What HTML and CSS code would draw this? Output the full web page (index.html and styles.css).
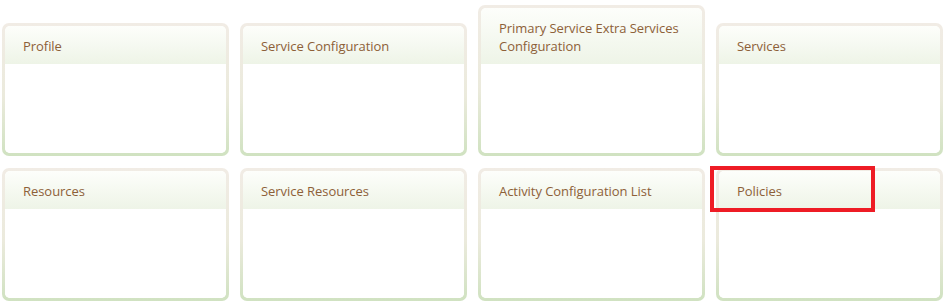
FILE: index.html
```html
<!DOCTYPE html>
<html>
<head>
<meta charset="utf-8">
<link rel="stylesheet" href="styles.css">
</head>
<body>
<div class="grid">
  <div class="row">
    <div class="tile"><div class="inner"><div class="head">Profile</div><div class="body"></div></div></div>
    <div class="tile"><div class="inner"><div class="head">Service Configuration</div><div class="body"></div></div></div>
    <div class="tile"><div class="inner"><div class="head">Primary Service Extra Services Configuration</div><div class="body"></div></div></div>
    <div class="tile"><div class="inner"><div class="head">Services</div><div class="body"></div></div></div>
  </div>
  <div class="row">
    <div class="tile"><div class="inner"><div class="head">Resources</div><div class="body"></div></div></div>
    <div class="tile"><div class="inner"><div class="head">Service Resources</div><div class="body"></div></div></div>
    <div class="tile"><div class="inner"><div class="head">Activity Configuration List</div><div class="body"></div></div></div>
    <div class="tile"><div class="inner"><div class="head">Policies</div><div class="body"></div></div></div>
  </div>
  <div class="highlight"></div>
</div>
</body>
</html>
```
FILE: styles.css
```css
html, body { margin: 0; padding: 0; background: #fff; }
body { width: 950px; height: 308px; overflow: hidden; font-family: "Open Sans", "Noto Sans", sans-serif; }
.grid { position: relative; padding: 5px 0 0 2px; display: flex; flex-direction: column; gap: 12px; }
.row { display: flex; align-items: flex-end; gap: 11px; }
.tile {
  width: 227px; box-sizing: border-box;
  padding: 3px; border-radius: 7px;
  background: linear-gradient(#f1ece5, #ebeadc 55%, #d0e2c1);
}
.inner { border-radius: 5px; overflow: hidden; background: #fff; }
.head {
  padding: 11px 16px 9px 18px;
  font-size: 13px; line-height: 18px; color: #8d6038;
  letter-spacing: -0.05px;
  background: linear-gradient(#fdfefb, #eef4e7);
}
.body { height: 89px; background: #fff; }
.highlight {
  position: absolute; left: 710px; top: 166px; width: 165px; height: 46px;
  box-sizing: border-box; border: 4px solid #ee1c25;
}
```
